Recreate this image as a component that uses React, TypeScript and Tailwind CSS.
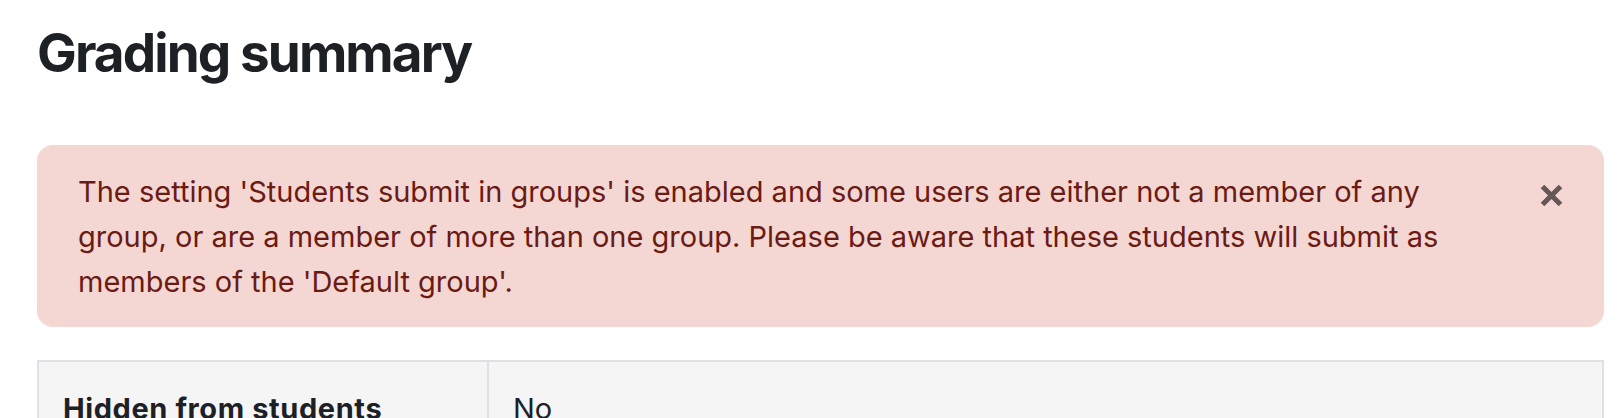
import React from "react";

const CloseIcon: React.FC = () => (
  <svg width="23" height="23" viewBox="0 0 23 23" aria-hidden="true">
    <path d="M2.5 2.5L20.5 20.5M20.5 2.5L2.5 20.5" stroke="#655757" strokeWidth="5" fill="none" />
  </svg>
);

const App: React.FC = () => {
  return (
    <div
      className="min-h-screen bg-white pl-[37px] pr-[18px] text-[#1d2125]"
      style={{ fontFamily: "Inter, 'Noto Sans', sans-serif" }}
    >
      <h2 className="pt-[21px] text-[53px] font-bold leading-[64px] tracking-[-1.9px]">
        Grading summary
      </h2>

      {/* Alert */}
      <div className="mt-[60px] flex items-start rounded-[16px] bg-[#f4d6d2] pt-[24px] pb-[23px] pl-[41px] pr-[41px] text-[#6b1b14]">
        <p className="mr-[65px] flex-1 text-[29px] leading-[45px]">
          The setting 'Students submit in groups' is enabled and some users are either not a member of any
          group, or are a member of more than one group. Please be aware that these students will submit as
          members of the 'Default group'.
        </p>
        <button type="button" className="mt-[15px] flex h-[23px] w-[23px] items-center justify-center">
          <CloseIcon />
        </button>
      </div>

      {/* Summary table */}
      <div className="mt-[33px] border-2 border-[#dee2e6] bg-[#f5f5f5]">
        <div className="flex text-[29px] leading-[45px]">
          <div className="w-[450px] border-r-2 border-[#dee2e6] px-[24px] py-[24px] font-bold tracking-[0.6px]">
            Hidden from students
          </div>
          <div className="flex-1 px-[24px] py-[24px]">No</div>
        </div>
      </div>
    </div>
  );
};

export default App;
